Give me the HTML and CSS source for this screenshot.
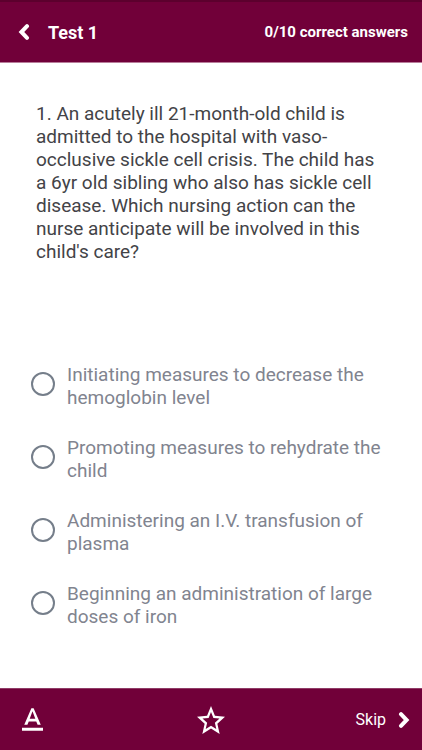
FILE: index.html
```html
<!DOCTYPE html>
<html lang="en">
<head>
<meta charset="utf-8">
<meta name="viewport" content="width=device-width, initial-scale=1">
<title>Test 1</title>
<link rel="stylesheet" href="styles.css">
</head>
<body>
<header class="bar top">
  <button class="icon-btn" aria-label="Back"><svg class="chevron" width="12" height="16" viewBox="0 0 12 16"><path d="M9 2.200 3.400 8 9 13.800"/></svg></button>
  <h1>Test 1</h1>
  <p class="score">0/10 correct answers</p>
</header>
<main>
  <form>
    <fieldset>
      <legend class="question">1. An acutely ill 21-month-old child is admitted to the hospital with vaso-occlusive sickle cell crisis. The child has a 6yr old sibling who also has sickle cell disease. Which nursing action can the nurse anticipate will be involved in this child's care?</legend>
      <div class="options">
        <label class="option"><input type="radio" name="answer"><span>Initiating measures to decrease the hemoglobin level</span></label>
        <label class="option"><input type="radio" name="answer"><span>Promoting measures to rehydrate the child</span></label>
        <label class="option"><input type="radio" name="answer"><span>Administering an I.V. transfusion of plasma</span></label>
        <label class="option"><input type="radio" name="answer"><span>Beginning an administration of large doses of iron</span></label>
      </div>
    </fieldset>
  </form>
</main>
<footer class="bar bottom">
  <button class="icon-btn format" aria-label="Text format"><svg class="solid" width="21" height="23" viewBox="5 4 14 15"><path d="M5 17v2h14v-2H5zm4.500-4.200h5l.9 2.200h2.100L12.750 4h-1.500L6.500 15h2.100l.9-2.200zM12 5.980L13.870 11h-3.740L12 5.980z"/></svg></button>
  <button class="icon-btn" aria-label="Favorite"><svg class="solid" width="28" height="28" viewBox="2 2 20 19" preserveAspectRatio="none"><path d="M22 9.240l-7.190-.62L12 2 9.190 8.630 2 9.240l5.460 4.730L5.820 21 12 17.270 18.180 21l-1.630-7.030L22 9.240zM12 15.400l-3.760 2.270 1-4.280-3.320-2.880 4.380-.38L12 6.100l1.710 4.040 4.380.38-3.320 2.880 1 4.280L12 15.400z"/></svg></button>
  <button class="icon-btn skip">Skip <svg class="chevron" width="12" height="16" viewBox="0 0 12 16"><path d="M3 2.200 8.600 8 3 13.800"/></svg></button>
</footer>
</body>
</html>
```
FILE: styles.css
```css
* { box-sizing: border-box; }
body {
  margin: 0;
  min-height: 100vh;
  display: flex;
  flex-direction: column;
  background: #fff;
  font-family: Roboto, sans-serif;
}
.bar {
  display: flex;
  align-items: center;
  background: #710039;
  color: #fff;
}
.top {
  height: 63px;
  padding: 0 14px 0 18px;
  border-top: 2px solid #5c002d;
  border-bottom: 1px solid #b87d9a;
}
.top h1 { margin: 0 0 0 18px; font-size: 18px; font-weight: 700; }
.score { margin: 0 0 0 auto; font-size: 15px; font-weight: 700; }
.icon-btn {
  display: flex;
  align-items: center;
  padding: 0;
  border: 0;
  background: none;
  color: inherit;
  font: inherit;
}
.chevron {
  fill: none;
  stroke: currentColor;
  stroke-width: 4;
  stroke-linecap: round;
}
.solid { fill: currentColor; }
main { flex: 1; padding: 39px 36px 0; }
fieldset { margin: 0; padding: 0; border: 0; min-width: 0; }
.question { padding: 0; font-size: 19px; line-height: 23px; color: #434347; }
.options { display: grid; gap: 27px; margin: 100px -8px 0 -5px; }
.option {
  display: flex;
  align-items: flex-start;
  gap: 12px;
  font-size: 19px;
  line-height: 23px;
  color: #81848f;
}
.option input {
  appearance: none;
  flex: none;
  width: 24px;
  height: 24px;
  margin: 9px 0 0;
  border: 2px solid #757e8a;
  border-radius: 50%;
}
.option input:checked { background: radial-gradient(#710039 45%, transparent 50%); }
.bottom {
  display: grid;
  grid-template-columns: 1fr auto 1fr;
  height: 62px;
  padding: 0 12px;
  border-top: 1px solid #8f3c66;
}
.format { padding-left: 10px; }
.skip { justify-self: end; gap: 12px; font-size: 16px; }
```
